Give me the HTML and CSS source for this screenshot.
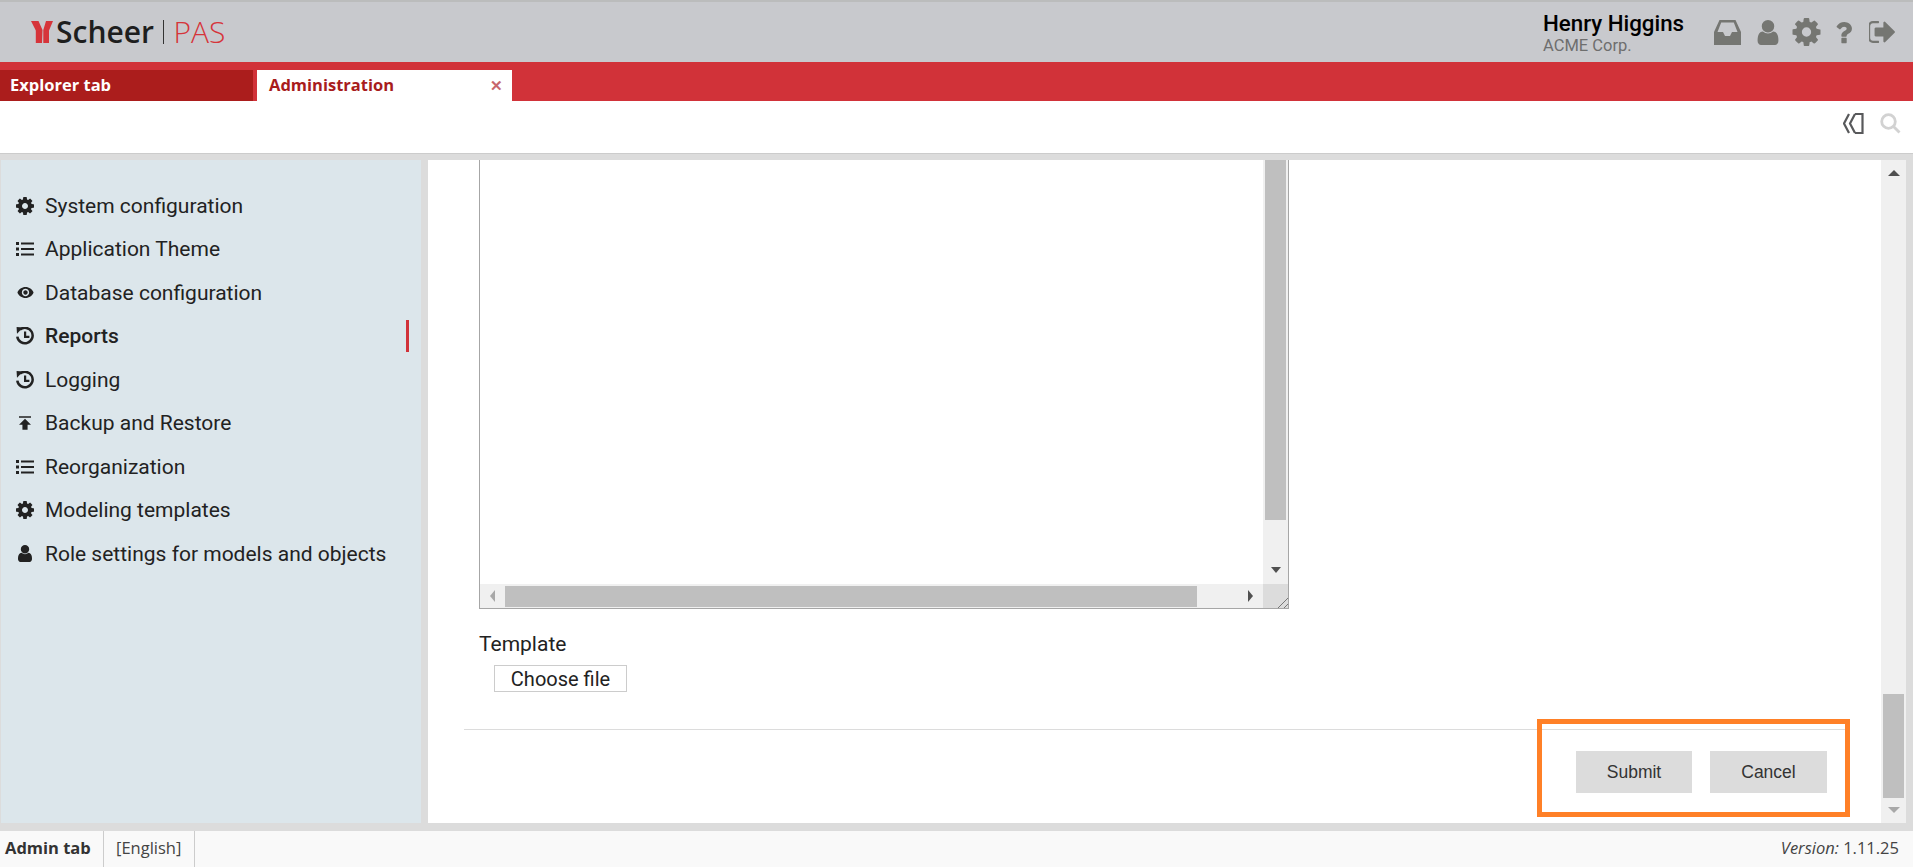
FILE: index.html
```html
<!DOCTYPE html>
<html lang="en">
<head>
<meta charset="utf-8">
<title>Scheer PAS Administration</title>
<link rel="stylesheet" href="styles.css">
</head>
<body>
<svg class="defs" aria-hidden="true">
  <symbol id="i-cog" viewBox="128 128 1536 1536"><path fill-rule="evenodd" d="M1152 896q0-106-75-181t-181-75-181 75-75 181 75 181 181 75 181-75 75-181zm512-109v222q0 12-8 24t-20 13l-185 28q-19 54-39 91 35 50 107 138 10 12 10 25t-9 23q-27 37-99 108t-94 71q-12 0-26-9l-138-108q-44 23-91 38-16 136-29 186-7 28-36 28h-222q-14 0-24.5-8.5t-11.5-21.5l-28-184q-49-16-90-37l-141 107q-10 9-25 9-14 0-25-11-126-114-165-168-7-10-7-23 0-12 8-23 15-21 51-66.5t54-70.5q-27-50-41-99l-183-27q-13-2-21-12.5t-8-23.5v-222q0-12 8-23t19-13l186-28q14-46 39-92-40-57-107-138-10-12-10-24 0-10 9-23 26-36 98.5-107.5t94.5-71.5q13 0 26 10l138 107q44-23 91-38 16-136 29-186 7-28 36-28h222q14 0 24.5 8.5t11.5 21.5l28 184q49 16 90 37l142-107q9-9 24-9 13 0 25 10 129 119 165 170 7 8 7 22 0 12-8 23-15 21-51 66.5t-54 70.5q26 50 41 98l183 28q13 2 21 12.5t8 23.5z"/></symbol>
  <symbol id="i-user" viewBox="256 128 1280 1536"><path d="M1536 1399q0 109-62.5 187t-150.5 78h-854q-88 0-150.5-78t-62.5-187q0-85 8.5-160.5t31.5-152 58.5-131 94-89 134.5-34.5q131 128 313 128t313-128q76 0 134.5 34.5t94 89 58.5 131 31.5 152 8.5 160.5zm-256-887q0 159-112.5 271.5t-271.5 112.5-271.5-112.5-112.5-271.5 112.5-271.5 271.5-112.5 271.5 112.5 112.5 271.5z"/></symbol>
  <symbol id="i-list" viewBox="0 0 18 14"><path d="M0 0h3v3H0zM0 5.5h3v3H0zM0 11h3v3H0zM5 .5h13v2H5zM5 6h13v2H5zM5 11.500h13v2H5z"/></symbol>
  <symbol id="i-eye" viewBox="1 4.500 22 15"><path d="M12 4.500C7 4.500 2.730 7.610 1 12c1.730 4.390 6 7.500 11 7.500s9.270-3.110 11-7.500c-1.730-4.390-6-7.500-11-7.500zM12 17c-2.760 0-5-2.240-5-5s2.240-5 5-5 5 2.240 5 5-2.240 5-5 5zm0-8c-1.660 0-3 1.340-3 3s1.340 3 3 3 3-1.340 3-3-1.340-3-3-3z"/></symbol>
  <symbol id="i-history" viewBox="0 0 18 18"><path d="M4 2.600A7.700 7.700 0 1 1 1.300 9.600" fill="none" stroke="#222" stroke-width="2.500"/><path d="M.6 0 7 .6 1 6.800z"/><path d="M8 4.400h2.200v4.400h3.200v2.100H8z"/></symbol>
  <symbol id="i-publish" viewBox="5 4 14 16"><path d="M5 4v2h14V4H5zm0 10h4v6h6v-6h4l-7-7-7 7z"/></symbol>
</svg>

<div class="app">
  <header class="topbar">
    <div class="logo">
      <svg class="logo-mark" viewBox="0 0 22 22" aria-hidden="true"><path d="M0 0h7.500L11.500 9 11 22H4.800V9.500zM15 0h7l-4 9.500V22h-5.700V9z"/></svg>
      <span class="logo-name">Scheer</span>
      <span class="logo-bar"></span>
      <span class="logo-pas">PAS</span>
    </div>
    <div class="account">
      <div class="account-name">Henry Higgins</div>
      <div class="account-org">ACME Corp.</div>
    </div>
    <div class="top-icons">
      <svg class="ti-inbox" viewBox="0 0 27 25" aria-hidden="true"><path fill-rule="evenodd" d="M5.500 0h16L27 12v13H0V12zM7.200 2.500 3.500 12H9l2 4h5l2-4h5.500l-3.700-9.500z"/></svg>
      <svg class="ti-user" aria-hidden="true"><use href="#i-user"/></svg>
      <svg class="ti-gear" aria-hidden="true"><use href="#i-cog"/></svg>
      <svg class="ti-help" viewBox="384 256 1024 1280" aria-hidden="true"><path d="M1088 1256v240q0 16-12 28t-28 12h-240q-16 0-28-12t-12-28v-240q0-16 12-28t28-12h240q16 0 28 12t12 28zm316-600q0 54-15.500 101t-35 76.500-55 59.500-57.500 43.500-61 35.500q-41 23-68.500 65t-27.500 67q0 17-12 32.500t-28 15.500h-240q-15 0-25.500-18.500t-10.500-37.500v-45q0-83 65-156.500t143-108.500q59-27 84-56t25-76q0-42-46.500-74t-107.500-32q-65 0-108 29-35 25-107 115-13 16-31 16-12 0-25-8l-164-125q-13-10-15.500-25t5.500-28q160-266 464-266 80 0 161 31t146 83 106 127.500 41 158.500z"/></svg>
      <svg class="ti-exit" viewBox="128 256 1504 1280" aria-hidden="true"><path d="M704 1440q0 4 1 20t.5 26.500-3 23.500-10 19.500-20.500 6.500h-320q-119 0-203.500-84.500t-84.500-203.500v-704q0-119 84.500-203.500t203.500-84.500h320q13 0 22.500 9.500t9.500 22.500q0 4 1 20t.5 26.500-3 23.500-10 19.500-20.500 6.500h-320q-66 0-113 47t-47 113v704q0 66 47 113t113 47h312l11.500 1 11.500 3 8 5.500 7 9 2 13.500zm928-544q0 26-19 45l-544 544q-19 19-45 19t-45-19-19-45v-288h-448q-26 0-45-19t-19-45v-384q0-26 19-45t45-19h448v-288q0-26 19-45t45-19 45 19l544 544q19 19 19 45z"/></svg>
    </div>
  </header>

  <nav class="tabbar">
    <div class="tab tab-dark">Explorer tab</div>
    <div class="tab tab-active"><span>Administration</span><span class="tab-close">✕</span></div>
  </nav>

  <div class="toolbar">
    <svg class="tool-back" viewBox="0 0 21 21" aria-hidden="true"><path d="M6 1 1 10.500 6 20M12 1 7 10.500 12 20M12 1h7.500v19H12" fill="none"/></svg>
    <svg class="tool-search" viewBox="0 0 21 21" aria-hidden="true"><circle cx="8.500" cy="8.500" r="6.800" fill="none"/><path d="m13.500 13.500 6 6" fill="none"/></svg>
  </div>

  <main class="workspace">
    <aside class="sidebar">
      <a class="nav-item"><span class="nav-icon"><svg class="ni-cog"><use href="#i-cog"/></svg></span>System configuration</a>
      <a class="nav-item"><span class="nav-icon"><svg class="ni-list"><use href="#i-list"/></svg></span>Application Theme</a>
      <a class="nav-item"><span class="nav-icon"><svg class="ni-eye"><use href="#i-eye"/></svg></span>Database configuration</a>
      <a class="nav-item active"><span class="nav-icon"><svg class="ni-cog"><use href="#i-history"/></svg></span>Reports<span class="active-bar"></span></a>
      <a class="nav-item"><span class="nav-icon"><svg class="ni-cog"><use href="#i-history"/></svg></span>Logging</a>
      <a class="nav-item"><span class="nav-icon"><svg class="ni-pub"><use href="#i-publish"/></svg></span>Backup and Restore</a>
      <a class="nav-item"><span class="nav-icon"><svg class="ni-list"><use href="#i-list"/></svg></span>Reorganization</a>
      <a class="nav-item"><span class="nav-icon"><svg class="ni-cog"><use href="#i-cog"/></svg></span>Modeling templates</a>
      <a class="nav-item"><span class="nav-icon"><svg class="ni-user"><use href="#i-user"/></svg></span>Role settings for models and objects</a>
    </aside>

    <section class="panel">
      <div class="form">
        <div class="textbox">
          <div class="tb-main">
            <div class="tb-text"></div>
            <div class="hbar">
              <span class="arrow arrow-left"></span>
              <div class="hbar-track"><div class="hbar-thumb"></div></div>
              <span class="arrow arrow-right"></span>
            </div>
          </div>
          <div class="tb-side">
            <div class="vbar">
              <div class="vbar-thumb"></div>
              <span class="arrow arrow-down"></span>
            </div>
            <div class="resizer"></div>
          </div>
        </div>
        <label class="field-label">Template</label>
        <div class="file-btn">Choose file</div>
        <div class="actions">
          <button class="btn btn-submit">Submit</button>
          <button class="btn">Cancel</button>
        </div>
      </div>
      <div class="page-scroll">
        <span class="arrow arrow-up"></span>
        <div class="page-thumb"></div>
        <span class="arrow arrow-down arrow-dim"></span>
      </div>
      <div class="highlight"></div>
    </section>
  </main>

  <footer class="statusbar">
    <div class="st-tab">Admin tab</div>
    <div class="st-lang">[English]</div>
    <div class="st-version"><em>Version:</em> 1.11.25</div>
  </footer>
</div>
</body>
</html>
```

FILE: styles.css
```css
* { box-sizing: border-box; }
html, body { margin: 0; padding: 0; background: #fff; overflow: hidden; }
body { font-family: Roboto, "Liberation Sans", sans-serif; color: #222; }
.defs { display: none; }
.app { width: 1913px; height: 867px; display: flex; flex-direction: column; }

.topbar { height: 62px; flex: none; background: #c8c9cd; border-top: 2px solid #bbbcbc; display: flex; align-items: flex-start; }
.logo { display: flex; align-items: center; height: 44px; margin: 8px 0 0 31px; width: 1512px; flex: none; }
.logo-mark { width: 22px; height: 22px; fill: #d6343a; flex: none; margin-right: 3px; }
.logo-name { font: 600 30px/44px "Open Sans", sans-serif; color: #1e1e1e; }
.logo-bar { width: 1.5px; height: 24px; background: #333; margin: 0 9px 0 9px; }
.logo-pas { font: 300 30px/44px "Open Sans", sans-serif; color: #d6343a; }
.account { width: 171px; flex: none; }
.account-name { font: 500 22.300px/24px Roboto, sans-serif; color: #000; margin-top: 9px; }
.account-org { font: 400 16.500px/18px Roboto, sans-serif; color: #6e6e6e; margin-top: 2px; }
.top-icons { display: flex; align-items: center; height: 28px; margin-top: 16px; fill: #757672; flex: none; }
.top-icons svg { display: block; flex: none; }
.ti-inbox { width: 27px; height: 25px; margin-right: 15px; }
.ti-user { width: 24px; height: 25px; margin-right: 12px; }
.ti-gear { width: 29px; height: 28px; margin-right: 14px; }
.ti-help { width: 17px; height: 23px; margin-right: 17px; }
.ti-exit { width: 26px; height: 22px; }

.tabbar { height: 39px; flex: none; background: #d13239; display: flex; align-items: flex-end; gap: 4px; }
.tab { height: 31px; width: 253px; font: 700 16.500px/30px "Open Sans", sans-serif; padding-left: 10px; }
.tab-dark { background: #ab1d1c; color: #fff; }
.tab-active { background: #fff; color: #a81c1c; width: 255px; padding: 0 9px 0 12px; display: flex; justify-content: space-between; }
.tab-close { color: #c7666b; font-size: 15px; font-weight: 700; }

.toolbar { height: 53px; flex: none; background: #fff; border-bottom: 1px solid #ccc; display: flex; align-items: flex-start; justify-content: flex-end; padding: 12px 12px 0 0; gap: 16px; }
.toolbar svg { width: 21px; height: 21px; display: block; }
.tool-back { stroke: #58595b; stroke-width: 2.200; }
.tool-search { stroke: #d2d2d2; stroke-width: 2.800; }

.workspace { height: 677px; flex: none; background: #dcdcdc; display: flex; gap: 7px; padding: 6px 7px 8px 1px; }
.sidebar { width: 420px; flex: none; background: #dce6eb; padding-top: 24px; }
.nav-item { display: flex; align-items: center; height: 43.500px; padding: 0 12px 0 14px; font-size: 21px; color: #222; }
.nav-item.active { font-weight: 500; }
.nav-icon { width: 30px; flex: none; display: flex; justify-content: center; padding-right: 10px; fill: #222; }
.nav-icon svg { display: block; }
.ni-cog { width: 18px; height: 18px; }
.ni-list { width: 18px; height: 14px; }
.ni-eye { width: 17px; height: 11px; }
.ni-pub { width: 12px; height: 14px; }
.ni-user { width: 14px; height: 17px; }
.active-bar { width: 3px; height: 32px; background: #d13239; margin-left: auto; }

.panel { flex: 1; min-width: 0; background: #fff; display: flex; position: relative; }
.form { flex: 1; min-width: 0; display: flex; flex-direction: column; justify-content: flex-end; overflow: hidden; }
.textbox { height: 449px; width: 810px; margin-left: 51px; flex: none; border: 1px solid #a6a6a6; border-top: 0; display: flex; }
.tb-main { flex: 1; min-width: 0; display: flex; flex-direction: column; }
.tb-text { flex: 1; }
.hbar { height: 24px; flex: none; background: #f0f0f0; display: flex; align-items: center; }
.hbar-track { flex: 1; height: 21px; padding-left: 25px; padding-right: 66px; margin-top: 1px; }
.hbar-thumb { height: 21px; background: #bfbfbf; }
.tb-side { width: 25px; flex: none; display: flex; flex-direction: column; }
.vbar { flex: 1; background: #f0f0f0; display: flex; flex-direction: column; align-items: center; padding: 0 2px; }
.vbar-thumb { width: 100%; height: 360px; background: #bfbfbf; }
.vbar .arrow-down { margin-top: 47px; }
.resizer { height: 24px; flex: none; background: linear-gradient(135deg, #dcdcdc 78%, #777 78%, #777 81%, #dcdcdc 81%, #dcdcdc 90%, #777 90%, #777 93%, #dcdcdc 93%); }

.arrow { display: block; width: 0; height: 0; flex: none; border-style: solid; border-color: transparent; }
.arrow-left { border-width: 6px 5px 6px 0; border-right-color: #a8a8a8; margin: 0 -15px 0 10px; }
.arrow-right { border-width: 6px 0 6px 5px; border-left-color: #505050; margin: 0 10px 0 -15px; }
.arrow-down { border-width: 6px 5px 0 5px; border-top-color: #505050; }
.arrow-up { border-width: 0 6px 6px 6px; border-bottom-color: #505050; }
.arrow-dim { border-width: 6px 6px 0 6px; border-top-color: #a8a8a8; }

.field-label { display: block; font-size: 21px; line-height: 24px; color: #222; margin: 23px 0 0 51px; }
.file-btn { width: 133px; height: 27px; margin: 9px 0 0 66px; border: 1px solid #ccc; font-size: 20px; line-height: 27px; text-align: center; color: #222; }
.actions { margin: 37px 36px 0 36px; padding: 21px 18px 30px 0; border-top: 1px solid #dcdcdc; display: flex; justify-content: flex-end; gap: 18px; }
.btn { width: 117px; height: 42px; border: 0; background: #dcdcdc; color: #333; font: 400 17.500px "Liberation Sans", Arial, sans-serif; padding: 0; }
.btn-submit { width: 116px; }

.page-scroll { width: 25px; flex: none; background: #f0f0f0; display: flex; flex-direction: column; align-items: center; padding: 10px 2px 10px; }
.page-thumb { width: 100%; height: 104px; background: #bfbfbf; margin-top: auto; margin-bottom: 9px; }

.highlight { position: absolute; right: 56px; bottom: 6px; width: 313px; height: 98px; border: 5px solid #ff8027; }

.statusbar { height: 36px; flex: none; background: #f9f9f9; display: flex; align-items: stretch; font: 400 16.500px/34px "Open Sans", sans-serif; color: #444; }
.st-tab { width: 104px; padding-left: 5px; font-weight: 700; color: #333; border-right: 1px solid #ccc; }
.st-lang { width: 91px; padding-left: 12px; border-right: 1px solid #ccc; }
.st-version { margin-left: auto; padding-right: 14px; }
```
